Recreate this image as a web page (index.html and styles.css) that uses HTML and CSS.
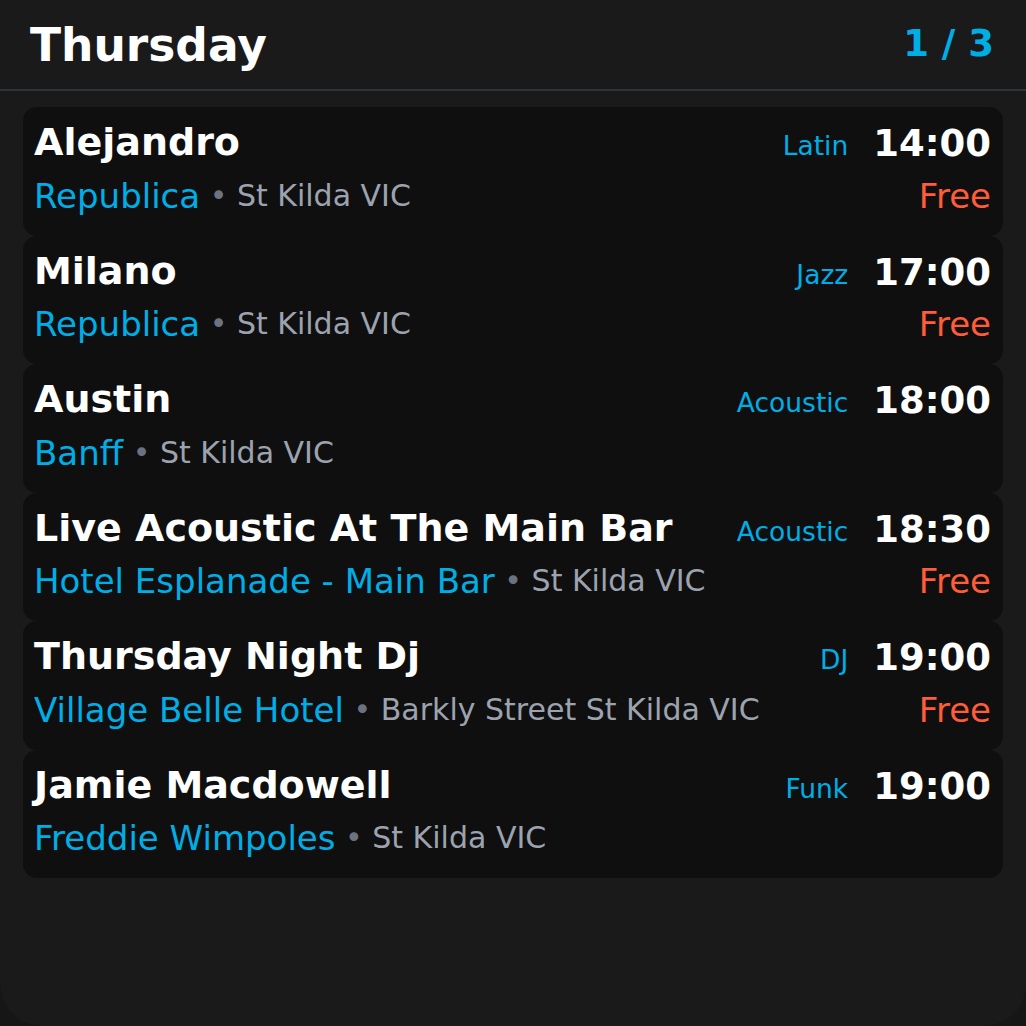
FILE: index.html
```html
<!DOCTYPE html>
<html lang="en">
<head>
<meta charset="utf-8">
<title>Thursday</title>
<link rel="stylesheet" href="styles.css">
</head>
<body>
<div class="screen">
  <header class="header">
    <h1 class="day">Thursday</h1>
    <div class="pager">1 / 3</div>
  </header>
  <div class="list">
    <div class="card">
      <div class="row top">
        <div class="title">Alejandro</div>
        <div class="meta"><span class="genre">Latin</span><span class="time">14:00</span></div>
      </div>
      <div class="row bottom">
        <div class="place"><span class="venue">Republica</span><span class="sep"> • </span><span class="loc">St Kilda VIC</span></div>
        <div class="price">Free</div>
      </div>
    </div>
    <div class="card">
      <div class="row top">
        <div class="title">Milano</div>
        <div class="meta"><span class="genre">Jazz</span><span class="time">17:00</span></div>
      </div>
      <div class="row bottom">
        <div class="place"><span class="venue">Republica</span><span class="sep"> • </span><span class="loc">St Kilda VIC</span></div>
        <div class="price">Free</div>
      </div>
    </div>
    <div class="card">
      <div class="row top">
        <div class="title">Austin</div>
        <div class="meta"><span class="genre">Acoustic</span><span class="time">18:00</span></div>
      </div>
      <div class="row bottom">
        <div class="place"><span class="venue">Banff</span><span class="sep"> • </span><span class="loc">St Kilda VIC</span></div>
        <div class="price"></div>
      </div>
    </div>
    <div class="card">
      <div class="row top">
        <div class="title">Live Acoustic At The Main Bar</div>
        <div class="meta"><span class="genre">Acoustic</span><span class="time">18:30</span></div>
      </div>
      <div class="row bottom">
        <div class="place"><span class="venue">Hotel Esplanade - Main Bar</span><span class="sep"> • </span><span class="loc">St Kilda VIC</span></div>
        <div class="price">Free</div>
      </div>
    </div>
    <div class="card">
      <div class="row top">
        <div class="title">Thursday Night Dj</div>
        <div class="meta"><span class="genre">DJ</span><span class="time">19:00</span></div>
      </div>
      <div class="row bottom">
        <div class="place"><span class="venue">Village Belle Hotel</span><span class="sep"> • </span><span class="loc">Barkly Street St Kilda VIC</span></div>
        <div class="price">Free</div>
      </div>
    </div>
    <div class="card">
      <div class="row top">
        <div class="title">Jamie Macdowell</div>
        <div class="meta"><span class="genre">Funk</span><span class="time">19:00</span></div>
      </div>
      <div class="row bottom">
        <div class="place"><span class="venue">Freddie Wimpoles</span><span class="sep"> • </span><span class="loc">St Kilda VIC</span></div>
        <div class="price"></div>
      </div>
    </div>
  </div>
</div>
</body>
</html>
```

FILE: styles.css
```css
* { box-sizing: border-box; }
html, body {
  margin: 0;
  padding: 0;
  background: #161616;
}
body {
  font-family: "DejaVu Sans", sans-serif;
  color: #ffffff;
}
.screen {
  width: 1026px;
  height: 1026px;
  background: #1a1a1a;
  border-radius: 0 0 42px 42px;
  overflow: hidden;
}
.header {
  height: 91px;
  display: flex;
  justify-content: space-between;
  align-items: flex-start;
  padding: 0 32px 0 30px;
  border-bottom: 2px solid #2e343d;
}
.day {
  margin: 0;
  font-size: 45.5px;
  font-weight: bold;
  line-height: 92px;
  color: #ffffff;
}
.pager {
  font-size: 37px;
  font-weight: bold;
  line-height: 87px;
  color: #00aee6;
}
.list {
  display: flex;
  flex-direction: column;
  padding: 16px 23px 0 23px;
}
.card {
  height: 128.5px;
  background: #0f0f0f;
  border-radius: 14px;
  padding: 12px 12px 0 11px;
}
.row {
  display: flex;
  justify-content: space-between;
  align-items: baseline;
}
.top { height: 46px; line-height: 46px; }
.bottom { height: 40px; line-height: 40px; margin-top: 10.5px; }
.title {
  font-size: 38px;
  font-weight: bold;
  white-space: nowrap;
}
.meta {
  display: flex;
  align-items: baseline;
  gap: 25px;
}
.genre {
  font-size: 26.5px;
  color: #00aee6;
}
.time {
  font-size: 37px;
  font-weight: bold;
  position: relative;
  top: 1px;
}
.place {
  font-size: 34px;
  white-space: pre;
}
.venue { color: #00aee6; }
.sep {
  color: #6b7280;
  font-size: 30px;
  vertical-align: 2px;
}
.loc {
  color: #9ca3af;
  font-size: 30px;
  vertical-align: 2px;
}
.price {
  font-size: 34px;
  color: #ff5c3a;
}
```
